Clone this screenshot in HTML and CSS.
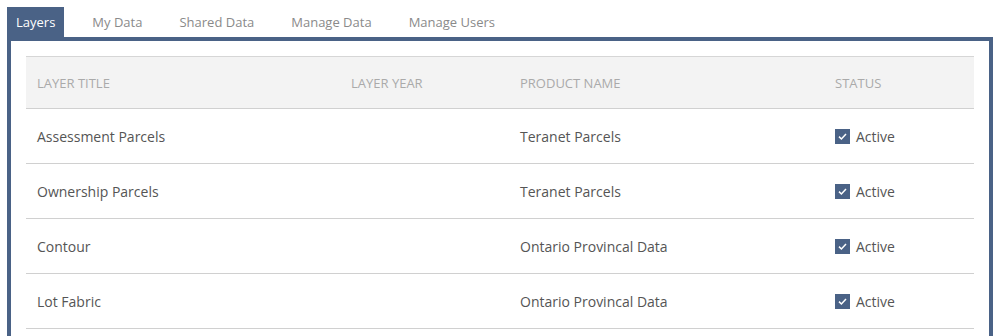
FILE: index.html
```html
<!DOCTYPE html>
<html lang="en">
<head>
    <meta charset="UTF-8">
    <meta name="viewport" content="width=device-width, initial-scale=1.0">
    <title>Layers</title>
    <link rel="stylesheet" href="styles.css">
</head>
<body>
<div class="tabs">
    <div class="tab active">Layers</div>
    <div class="tab">My Data</div>
    <div class="tab">Shared Data</div>
    <div class="tab">Manage Data</div>
    <div class="tab">Manage Users</div>
</div>
<div class="panel">
    <table class="layers">
        <colgroup>
            <col class="col-title">
            <col class="col-year">
            <col class="col-product">
            <col class="col-status">
        </colgroup>
        <thead>
            <tr>
                <th>Layer Title</th>
                <th>Layer Year</th>
                <th>Product Name</th>
                <th>Status</th>
            </tr>
        </thead>
        <tbody>
            <tr>
                <td>Assessment Parcels</td>
                <td></td>
                <td>Teranet Parcels</td>
                <td><span class="status"><span class="check"><svg width="11" height="11" viewBox="0 0 11 11"><path d="M2 5.6 L4.4 8 L9 3" fill="none" stroke="#fff" stroke-width="1.5"/></svg></span>Active</span></td>
            </tr>
            <tr>
                <td>Ownership Parcels</td>
                <td></td>
                <td>Teranet Parcels</td>
                <td><span class="status"><span class="check"><svg width="11" height="11" viewBox="0 0 11 11"><path d="M2 5.6 L4.4 8 L9 3" fill="none" stroke="#fff" stroke-width="1.5"/></svg></span>Active</span></td>
            </tr>
            <tr>
                <td>Contour</td>
                <td></td>
                <td>Ontario Provincal Data</td>
                <td><span class="status"><span class="check"><svg width="11" height="11" viewBox="0 0 11 11"><path d="M2 5.6 L4.4 8 L9 3" fill="none" stroke="#fff" stroke-width="1.5"/></svg></span>Active</span></td>
            </tr>
            <tr>
                <td>Lot Fabric</td>
                <td></td>
                <td>Ontario Provincal Data</td>
                <td><span class="status"><span class="check"><svg width="11" height="11" viewBox="0 0 11 11"><path d="M2 5.6 L4.4 8 L9 3" fill="none" stroke="#fff" stroke-width="1.5"/></svg></span>Active</span></td>
            </tr>
        </tbody>
    </table>
</div>
</body>
</html>
```

FILE: styles.css
```css
body {
    margin: 0;
    padding: 7px 0 0 7px;
    font-family: "Open Sans", "Noto Sans", sans-serif;
    background-color: #fff;
    color: #555;
}

.tabs {
    display: flex;
    height: 30px;
}

.tab {
    padding: 1px 9px 0 9px;
    margin-right: 19px;
    line-height: 29px;
    font-size: 13px;
    color: #8a8a8a;
}

.tab.active {
    background-color: #4a6286;
    color: #fff;
}

.panel {
    width: 948px;
    height: 280px;
    border: 4px solid #4a6286;
    border-bottom: none;
    padding: 15px 15px 0 15px;
}

.layers {
    width: 948px;
    border-collapse: collapse;
    table-layout: fixed;
}

.col-title { width: 314px; }
.col-year { width: 169px; }
.col-product { width: 315px; }
.col-status { width: 150px; }

.layers th {
    height: 51px;
    padding: 0 11px;
    background-color: #f3f3f3;
    border-top: 1px solid #d6d6d6;
    border-bottom: 1px solid #d0d0d0;
    text-align: left;
    font-weight: normal;
    font-size: 13px;
    text-transform: uppercase;
    color: #aaa;
}

.layers td {
    height: 53px;
    padding: 1px 11px 0 11px;
    border-bottom: 1px solid #d0d0d0;
    font-size: 14px;
}

.status {
    display: flex;
    align-items: center;
    gap: 6px;
}

.check {
    width: 15px;
    height: 15px;
    background-color: #4a6286;
    display: flex;
    align-items: center;
    justify-content: center;
}
```
